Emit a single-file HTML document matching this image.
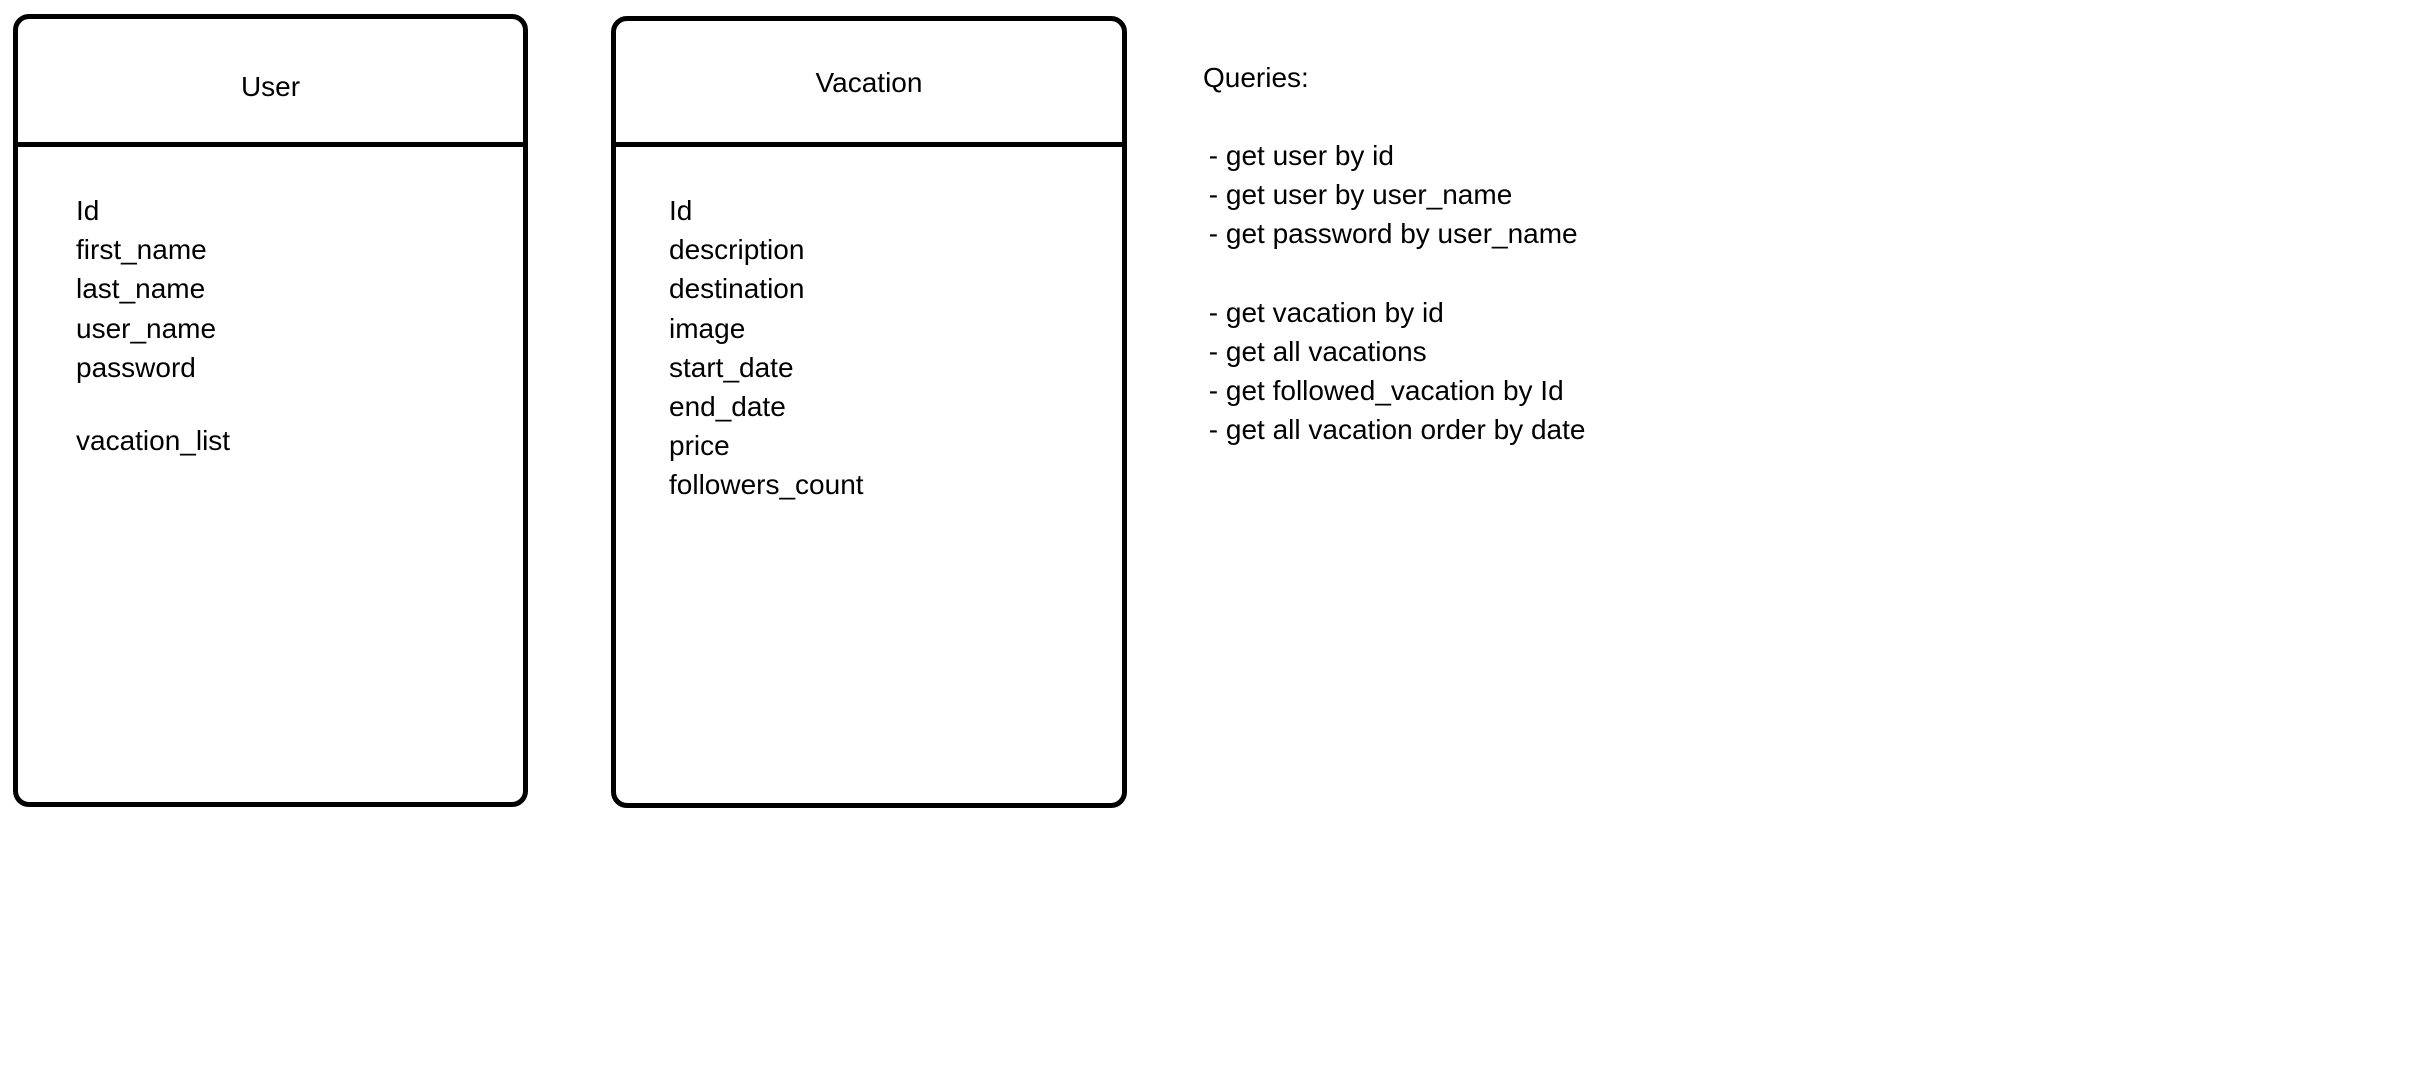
<!DOCTYPE html>
<html><head><meta charset="utf-8"><style>
html,body{margin:0;padding:0;background:#fff;width:2411px;height:1083px;overflow:hidden;position:relative;font-family:"Liberation Sans",sans-serif;color:#000}
.box{position:absolute;border:5px solid #000;border-radius:16px;box-sizing:border-box}
.div{position:absolute;left:0;right:0;height:5px;background:#000}
.t{position:absolute;font-size:28px;line-height:39.2px;white-space:pre}
</style></head><body>
<div class="box" style="left:13px;top:14px;width:515px;height:793px"><div class="div" style="top:123px"></div></div>
<div class="box" style="left:611px;top:16px;width:516px;height:792px"><div class="div" style="top:121px"></div></div>
<div class="t" style="left:13px;width:515px;text-align:center;top:67px">User</div>
<div class="t" style="left:611px;width:516px;text-align:center;top:63px">Vacation</div>
<div class="t" style="left:76px;top:191px">Id
first_name
last_name
user_name
password</div>
<div class="t" style="left:76px;top:421px">vacation_list</div>
<div class="t" style="left:669px;top:191px">Id
description
destination
image
start_date
end_date
price
followers_count</div>
<div class="t" style="left:1203px;top:58px">Queries:</div>
<div class="t" style="left:1201px;top:136px"> - get user by id
 - get user by user_name
 - get password by user_name

 - get vacation by id
 - get all vacations
 - get followed_vacation by Id
 - get all vacation order by date</div>
</body></html>
